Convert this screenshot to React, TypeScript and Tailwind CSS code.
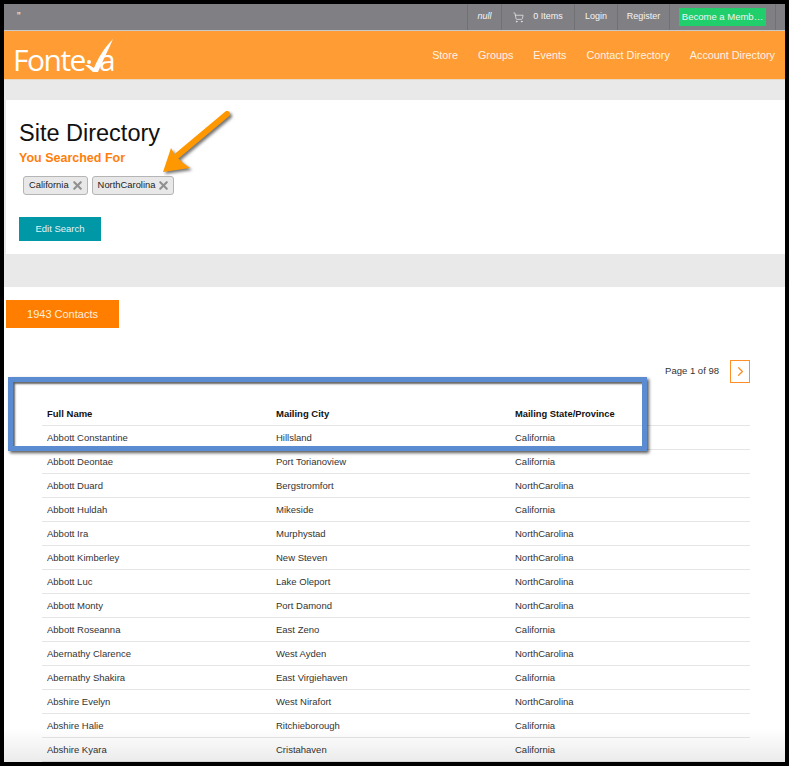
import { ChevronRight, ShoppingCart, X } from "lucide-react";

const rows = [
  ["Abbott Constantine", "Hillsland", "California"],
  ["Abbott Deontae", "Port Torianoview", "California"],
  ["Abbott Duard", "Bergstromfort", "NorthCarolina"],
  ["Abbott Huldah", "Mikeside", "California"],
  ["Abbott Ira", "Murphystad", "NorthCarolina"],
  ["Abbott Kimberley", "New Steven", "NorthCarolina"],
  ["Abbott Luc", "Lake Oleport", "NorthCarolina"],
  ["Abbott Monty", "Port Damond", "NorthCarolina"],
  ["Abbott Roseanna", "East Zeno", "California"],
  ["Abernathy Clarence", "West Ayden", "NorthCarolina"],
  ["Abernathy Shakira", "East Virgiehaven", "California"],
  ["Abshire Evelyn", "West Nirafort", "NorthCarolina"],
  ["Abshire Halie", "Ritchieborough", "California"],
  ["Abshire Kyara", "Cristahaven", "California"],
];

const navLinks = ["Store", "Groups", "Events", "Contact Directory", "Account Directory"];

function Tag({ label }: { label: string }) {
  return (
    <div className="flex h-[19px] items-center gap-[2px] rounded-[3px] border border-[#b5b5b5] bg-[#e8e8e8] pl-[5px] pr-[3px] text-[9.4px] text-[#222]">
      {label}
      <X size={13} strokeWidth={4} className="text-[#909090]" />
    </div>
  );
}

export default function App() {
  return (
    <div className="relative h-[766px] w-[789px] overflow-hidden bg-black p-[4px] font-['Liberation_Sans',Arial,sans-serif]">
      <div className="relative h-[758px] overflow-hidden bg-white">
        {/* top bar */}
        <div className="flex h-[27px] items-center justify-between border-b border-[#c9c9cb] bg-[#808084] text-[9px] text-[#f4f4f4]">
          <span className="pl-[13px] text-[10px] leading-none">"</span>
          <div className="flex h-[26px] items-stretch pr-[9px]">
            <div className="flex w-[34px] items-center justify-center border-l border-[#717175] italic">null</div>
            <div className="flex w-[73px] items-center justify-center gap-[9px] border-l border-[#717175]">
              <ShoppingCart size={11} strokeWidth={1.5} />0 Items
            </div>
            <div className="flex w-[43px] items-center justify-center border-l border-[#717175]">Login</div>
            <div className="flex w-[52px] items-center justify-center border-l border-[#717175]">Register</div>
            <div className="flex w-[107px] items-center justify-center border-x border-[#717175]">
              <span className="flex h-[18px] w-[87px] items-center justify-center bg-[#20cf6b] text-[9.5px]">Become a Memb…</span>
            </div>
          </div>
        </div>

        {/* orange nav */}
        <div className="flex h-[49px] items-center justify-between border-b border-[#e9d9c4] bg-[#ff9c33] pl-[9px] pr-[10px]">
          <div className="relative mt-[14px] flex h-[30px] self-start font-['Open_Sans',sans-serif] text-[30px] font-normal leading-none tracking-[-1.5px] text-white">
            <span>Fonte</span>
            <svg width="32" height="36" viewBox="0 0 32 36" className="absolute left-[69px] top-[-7px]">
              <path d="M3 27 L7 27 L12 30 C16 20 23 9 31 1 C26 13 20 24 16 34 L11 34 Z" fill="#fff" />
              <circle cx="7" cy="24" r="2" fill="#fff" />
            </svg>
            <span className="ml-[14px]">a</span>
          </div>
          <div className="flex gap-[20px] text-[10.8px] text-[#fff3e3]">
            {navLinks.map((n) => (
              <span key={n}>{n}</span>
            ))}
          </div>
        </div>

        <div className="h-[20px] bg-[#e9e9e9]" />

        {/* search summary */}
        <div className="h-[154px] border-l-2 border-[#e9e9e9] pl-[13px] pt-[20px]">
          <h1 className="text-[23.5px] leading-[26px] text-[#111]">Site Directory</h1>
          <div className="mt-[4px] text-[12.5px] font-bold leading-[16px] text-[#ff7e0c]">You Searched For</div>
          <div className="ml-[4px] mt-[10px] flex gap-[4px]">
            <Tag label="California" />
            <Tag label="NorthCarolina" />
          </div>
          <div className="mt-[22px] flex h-[24px] w-[82px] items-center justify-center bg-[#0097a7] text-[9.5px] text-[#e2f4f6]">
            Edit Search
          </div>
        </div>

        <div className="h-[33px] bg-[#e9e9e9]" />

        {/* results */}
        <div className="pl-[2px]">
          <div className="mt-[13px] flex h-[28px] w-[113px] items-center justify-center bg-[#ff7e00] text-[11px] text-[#ffeedd]">
            1943 Contacts
          </div>
          <div className="mr-[35px] mt-[32px] flex h-[23px] items-center justify-end gap-[11px]">
            <span className="text-[9.5px] text-[#333]">Page 1 of 98</span>
            <div className="flex h-[23px] w-[20px] items-center justify-center border border-[#ff8f26]">
              <ChevronRight size={15} strokeWidth={2} className="text-[#ff8f26]" />
            </div>
          </div>
          <div className="ml-[36px] mr-[35px] mt-[20px] text-[9.5px] text-[#333]">
            <div className="flex h-[23px] items-center border-b border-[#e5e5e5] font-bold text-[#111]">
              <span className="ml-[5px] w-[229px]">Full Name</span>
              <span className="w-[239px]">Mailing City</span>
              <span className="text-[9.35px]">Mailing State/Province</span>
            </div>
            {rows.map((r) => (
              <div key={r[0]} className="flex h-[24px] items-center border-b border-[#e5e5e5] pt-[2px]">
                <span className="ml-[5px] w-[229px]">{r[0]}</span>
                <span className="w-[239px]">{r[1]}</span>
                <span>{r[2]}</span>
              </div>
            ))}
          </div>
        </div>

        {/* fade at the bottom of the capture */}
        <div className="pointer-events-none absolute inset-x-0 bottom-0 h-[34px] bg-gradient-to-b from-transparent to-[#00000014]" />

        {/* annotation: blue highlight box */}
        <div className="absolute left-[4px] top-[373px] h-[74px] w-[639px] border-[5px] border-[#5b8bd0] shadow-[2px_2px_3px_rgba(0,0,0,0.65),inset_2px_2px_2px_rgba(0,0,0,0.6)]" />

        {/* annotation: arrow */}
        <svg width="80" height="76" viewBox="0 0 80 76" className="absolute left-[156px] top-[104px] drop-shadow-[2px_2px_1.5px_rgba(0,0,0,0.55)]">
          <path d="M67 6 L18 47" stroke="#ff9800" strokeWidth="6" strokeLinecap="round" fill="none" />
          <path d="M3 64 L11 40 L15 47 L23 55 L30 60 Z" fill="#ff9800" />
        </svg>
      </div>
    </div>
  );
}
